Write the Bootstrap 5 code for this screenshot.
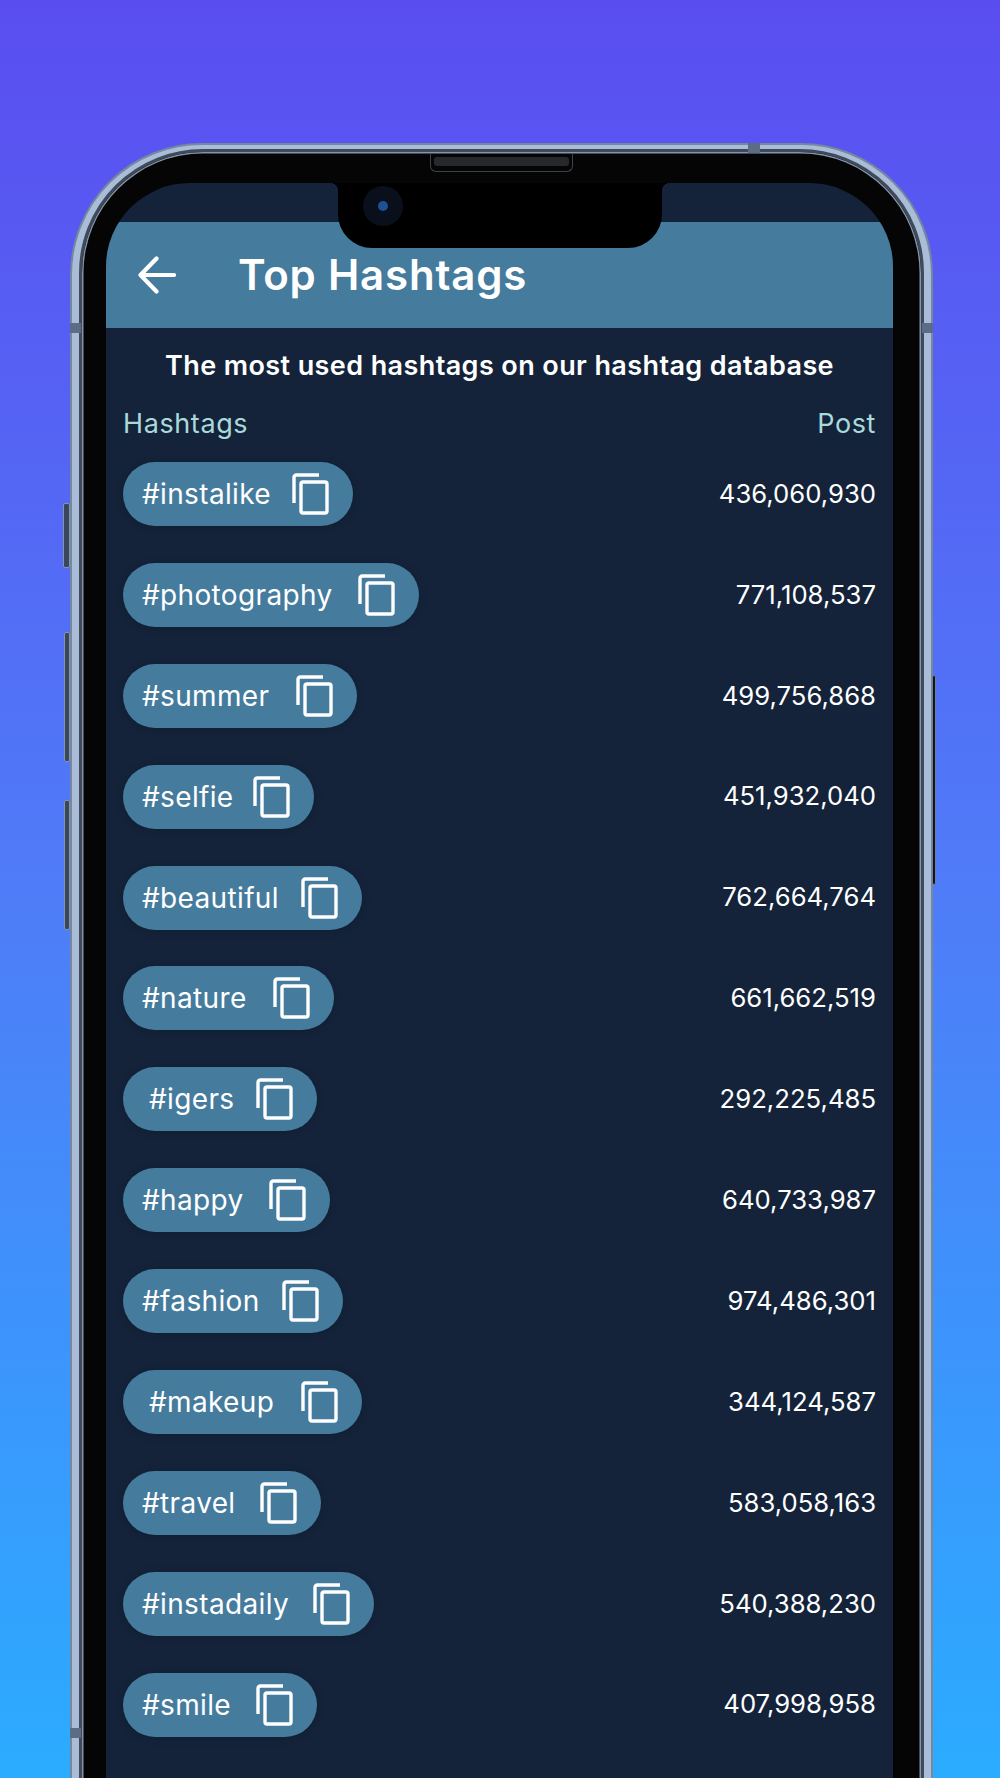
<!DOCTYPE html>
<html lang="en">
<head>
    <meta charset="UTF-8">
    <title>Top Hashtags</title>
    <link href="https://cdn.jsdelivr.net/npm/bootstrap@5.3.0/dist/css/bootstrap.min.css" rel="stylesheet">
    <style>
        html, body { height: 1778px; overflow: hidden; }
        body {
            background: linear-gradient(180deg, #5a4df0 0%, #4f7cf8 50%, #2bacff 100%);
            font-family: Inter, "Liberation Sans", sans-serif;
            padding: 143px 67px 0 70px;
        }
        .phone-shell {
            position: relative;
            height: 1800px;
            border: 2px solid #76879e;
            border-radius: 132px;
            background: #a9bcd8;
            padding: 4px 7px;
        }
        .phone-rim {
            height: 100%;
            border: 3px solid #3f4a5a;
            border-radius: 124px;
            background: #050505;
            box-shadow: inset 0 0 0 1.500px #8494aa;
            padding: 31px 28px 0 24px;
        }
        .phone-screen {
            height: 100%;
            background: #14233a;
            border-radius: 84px 84px 0 0;
            overflow: hidden;
        }
        .side-btn { position: absolute; width: 7px; background: #39475c; border: 1px solid #8494aa; border-radius: 2px; }
        .btn-mute { left: -9px; top: 358px; height: 65px; }
        .btn-up { left: -8px; top: 487px; height: 130px; width: 6px; }
        .btn-down { left: -8px; top: 655px; height: 130px; width: 6px; }
        .btn-power { right: -5px; top: 530px; height: 210px; width: 4px; background: #10151f; border-color: #6f7f96; }
        .band { position: absolute; background: #5b6c84; }
        .band-l { left: -2px; top: 178px; width: 11px; height: 10px; }
        .band-r { right: -2px; top: 178px; width: 11px; height: 10px; }
        .band-t { right: 171px; top: -2px; width: 12px; height: 10px; }
        .band-b { left: -2px; top: 1583px; width: 11px; height: 10px; }
        .speaker {
            position: absolute; left: 358px; top: 9px; width: 143px; height: 18px;
            border: 1px solid #3e4247; border-top: 0; border-radius: 0 0 6px 6px;
            padding: 3px;
        }
        .speaker::before { content: ""; display: block; height: 9px; background: #26282b; border-radius: 3px; }
        .notch {
            position: absolute; left: 266px; top: 38px; width: 324px; height: 65px;
            background: #000; border-radius: 0 0 34px 34px;
        }
        .notch::before, .notch::after { content: ""; position: absolute; top: 0; width: 8px; height: 8px; }
        .notch::before { left: -8px; background: radial-gradient(circle at 0 100%, transparent 8px, #000 8px); }
        .notch::after { right: -8px; background: radial-gradient(circle at 100% 100%, transparent 8px, #000 8px); }
        .camera {
            position: absolute; left: 25px; top: 3px; width: 40px; height: 40px;
            border-radius: 50%; background: #0a0f1c;
        }
        .camera::after {
            content: ""; position: absolute; left: 15px; top: 15px; width: 10px; height: 10px;
            border-radius: 50%; background: #1f4f95;
        }
        .status-strip { height: 39px; }
        .app-header { height: 106px; background: #457b9d; color: #fff; padding-left: 32px; gap: 62px; }
        .app-title { font-size: 42px; font-weight: 600; margin: 0; letter-spacing: .8px; }
        .app-body { padding: 0 17px; }
        .intro-line { font-size: 27px; font-weight: 600; color: #fff; margin: 20px 0 0; line-height: 36px; letter-spacing: .4px; }
        .col-heads { color: #a8dadc; font-size: 27px; line-height: 36px; margin-top: 22px; letter-spacing: .6px; }
        .tag-list { gap: 36.9px; margin-top: 20px; }
        .tag-pill {
            height: 64px; background: #457b9d; border-radius: 32px; color: #fff;
            padding: 0 24px 0 19px; font-size: 28px; letter-spacing: .35px;
            box-shadow: 0 1px 8px rgba(0, 0, 0, .15);
        }
        .tag-pill.shifted { padding-left: 26px; }
        .post-count { color: #fff; font-size: 25.7px; }
    </style>
</head>
<body>
    <div class="phone-shell">
        <div class="side-btn btn-mute"></div>
        <div class="side-btn btn-up"></div>
        <div class="side-btn btn-down"></div>
        <div class="side-btn btn-power"></div>
        <div class="band band-l"></div>
        <div class="band band-r"></div>
        <div class="band band-t"></div>
        <div class="band band-b"></div>
        <div class="phone-rim">
            <div class="phone-screen">
                <div class="status-strip"></div>
                <div class="app-header d-flex align-items-center">
                    <svg width="38" height="38" viewBox="0 0 38 38" fill="none" stroke="#fff" stroke-width="4.2" stroke-linecap="round" stroke-linejoin="round"><path d="M36 19H3M18.500 2.500 2.500 19l16 16.500"/></svg>
                    <h1 class="app-title">Top Hashtags</h1>
                </div>
                <div class="app-body">
                    <p class="intro-line text-center">The most used hashtags on our hashtag database</p>
                    <div class="col-heads d-flex justify-content-between">
                        <span>Hashtags</span>
                        <span>Post</span>
                    </div>
                    <div id="tagList" class="tag-list d-flex flex-column"></div>
                </div>
            </div>
        </div>
        <div class="speaker"></div>
        <div class="notch"><div class="camera"></div></div>
    </div>

    <script>
        // name, posts, pill width, text sits a bit further in
        const tags = [
            ["#instalike", "436,060,930", 230],
            ["#photography", "771,108,537", 296],
            ["#summer", "499,756,868", 234],
            ["#selfie", "451,932,040", 191],
            ["#beautiful", "762,664,764", 239],
            ["#nature", "661,662,519", 211],
            ["#igers", "292,225,485", 194, true],
            ["#happy", "640,733,987", 207],
            ["#fashion", "974,486,301", 220],
            ["#makeup", "344,124,587", 239, true],
            ["#travel", "583,058,163", 198],
            ["#instadaily", "540,388,230", 251],
            ["#smile", "407,998,958", 194]
        ];

        const copyIcon = `<svg width="37" height="42" viewBox="0 0 37 42" fill="none" stroke="#fff" stroke-width="3.4" stroke-linejoin="round"><path d="M2 30V4.500Q2 2 4.500 2H27"/><rect x="9" y="9" width="26" height="31" rx="2"/></svg>`;

        const list = document.getElementById("tagList");
        tags.forEach(([name, posts, width, shifted]) => {
            const row = document.createElement("div");
            row.className = "d-flex justify-content-between align-items-center";
            row.innerHTML = `
                <div class="tag-pill d-flex justify-content-between align-items-center ${shifted ? "shifted" : ""}" style="width: ${width}px">
                    <span>${name}</span>${copyIcon}
                </div>
                <span class="post-count">${posts}</span>
            `;
            list.appendChild(row);
        });
    </script>
</body>
</html>
